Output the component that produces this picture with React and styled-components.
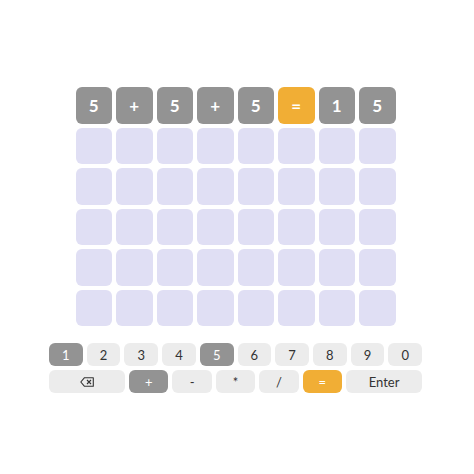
import styled, { createGlobalStyle } from "styled-components";

const GlobalStyle = createGlobalStyle`
  html, body {
    margin: 0;
    padding: 0;
    background: #fff;
    font-family: Lato, "Open Sans", sans-serif;
  }
`;

const rows = [
  ["5", "+", "5", "+", "5", "=", "1", "5"],
  ...Array.from({ length: 5 }, () => Array(8).fill("")),
];

const tileColors = {
  gray: "#939393",
  orange: "#f1ae35",
  empty: "#e0dff4",
};

const numberKeys = ["1", "2", "3", "4", "5", "6", "7", "8", "9", "0"];
const usedKeys = { 1: "gray", 5: "gray", "+": "gray", "=": "orange" };

const tileTone = (value) => {
  if (!value) return "empty";
  return value === "=" ? "orange" : "gray";
};

const BackspaceIcon = () => (
  <svg width="14" height="10" viewBox="0 0 14 10" fill="none">
    <path
      d="M4.5 0.7 H13.3 V9.3 H4.5 L0.8 5 Z"
      stroke="#333"
      strokeWidth="1.1"
      strokeLinejoin="round"
    />
    <path d="M7 3 L11 7 M11 3 L7 7" stroke="#333" strokeWidth="1.1" />
  </svg>
);

const App = () => {
  return (
    <Page>
      <GlobalStyle />
      <Board>
        {rows.map((row, r) =>
          row.map((value, c) => (
            <Tile key={`${r}-${c}`} $tone={tileTone(value)}>
              {value}
            </Tile>
          ))
        )}
      </Board>
      <Keyboard>
        <KeyRow>
          {numberKeys.map((k) => (
            <Key key={k} $tone={usedKeys[k]}>
              {k}
            </Key>
          ))}
        </KeyRow>
        <KeyRow>
          <Key $wide>
            <BackspaceIcon />
          </Key>
          {["+", "-", "*", "/", "="].map((k) => (
            <Key key={k} $tone={usedKeys[k]}>
              {k}
            </Key>
          ))}
          <Key $wide>Enter</Key>
        </KeyRow>
      </Keyboard>
    </Page>
  );
};

const Page = styled.main`
  width: 474px;
  height: 474px;
  box-sizing: border-box;
  padding: 87px 3px 0 0;
  display: flex;
  flex-direction: column;
  align-items: center;
`;

const Board = styled.div`
  width: 320px;
  display: grid;
  grid-template-columns: repeat(8, 1fr);
  gap: 4px;
`;

const Tile = styled.div`
  height: 36.5px;
  border-radius: 6px;
  display: flex;
  align-items: center;
  justify-content: center;
  background: ${({ $tone }) => tileColors[$tone]};
  color: #fff;
  font-size: 17px;
  font-weight: 700;
`;

const Keyboard = styled.div`
  width: 373px;
  margin-top: 17px;
  display: flex;
  flex-direction: column;
  gap: 4px;
`;

const KeyRow = styled.div`
  display: flex;
  gap: 4px;
`;

const Key = styled.button`
  flex: ${({ $wide }) => ($wide ? "0 0 76px" : "1 1 0")};
  min-width: 0;
  height: 23px;
  padding: 0;
  border: none;
  border-radius: 6px;
  display: flex;
  align-items: center;
  justify-content: center;
  font-family: Lato, "Open Sans", sans-serif;
  font-size: 13px;
  background: ${({ $tone }) =>
    $tone === "gray" ? "#939393" : $tone === "orange" ? "#f1ae35" : "#ececec"};
  color: ${({ $tone }) => ($tone ? "#fff" : "#333")};
`;

export default App;
